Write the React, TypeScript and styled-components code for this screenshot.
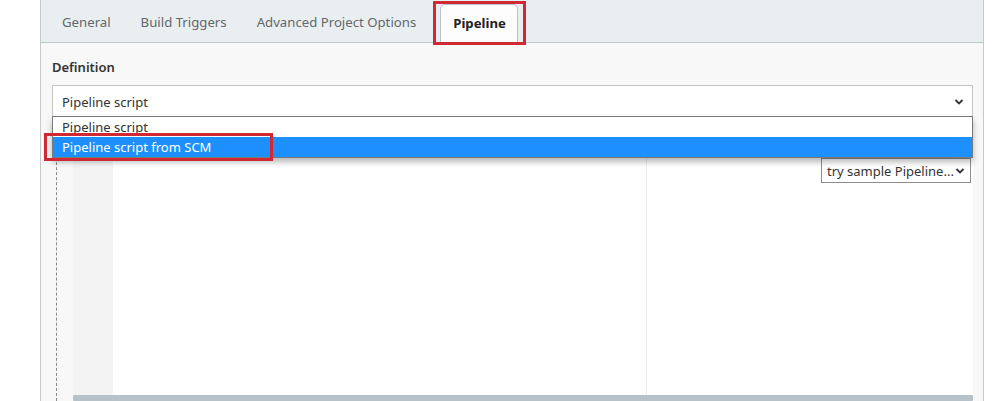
import React from "react";
import styled, { createGlobalStyle } from "styled-components";

const GlobalStyle = createGlobalStyle`
  html, body { margin: 0; padding: 0; background: #ffffff; }
  body { font-family: "Noto Sans", "Open Sans", "Liberation Sans", sans-serif; overflow: hidden; }
`;

const Page = styled.div`
  width: 1001px;
  height: 401px;
  padding-left: 40px;
  box-sizing: border-box;
  overflow: hidden;
`;

const Panel = styled.div`
  width: 944px;
  height: 401px;
  box-sizing: border-box;
  border-left: 1px solid #c9c9c9;
  border-right: 1px solid #c9c9c9;
  background: #f8f8f8;
  display: flex;
  flex-direction: column;
`;

const TabBar = styled.div`
  height: 43px;
  box-sizing: border-box;
  background: #e9eef1;
  border-bottom: 1px solid #bfc8cd;
  display: flex;
  align-items: flex-end;
  gap: 8px;
  padding-left: 10px;
`;

const Tab = styled.div<{ $active?: boolean }>`
  position: relative;
  height: ${(p) => (p.$active ? "39px" : "42px")};
  box-sizing: border-box;
  padding: ${(p) => (p.$active ? "0 11px 2px 12px" : "2px 11px 0 11px")};
  margin-left: ${(p) => (p.$active ? "5px" : "0")};
  display: flex;
  align-items: center;
  font-size: 13.2px;
  color: ${(p) => (p.$active ? "#222" : "#63686c")};
  font-weight: ${(p) => (p.$active ? 700 : 400)};
  background: ${(p) => (p.$active ? "#fdfdfd" : "transparent")};
  border: ${(p) => (p.$active ? "1px solid #b9c2c7" : "none")};
  border-bottom: none;
  border-radius: 5px 5px 0 0;
  margin-bottom: ${(p) => (p.$active ? "-1px" : "0")};
`;

const RedBox = styled.div<{ $t: number; $r: number; $b: number; $l: number }>`
  position: absolute;
  top: ${(p) => p.$t}px;
  right: ${(p) => p.$r}px;
  bottom: ${(p) => p.$b}px;
  left: ${(p) => p.$l}px;
  border: 3px solid #cf2a33;
  pointer-events: none;
  z-index: 5;
`;

const Content = styled.div`
  flex: 1;
  padding: 0 10px 0 11px;
  display: flex;
  flex-direction: column;
`;

const Label = styled.div`
  font-size: 13px;
  font-weight: 600;
  color: #333;
  margin-top: 15px;
  height: 18px;
  line-height: 18px;
`;

const SelectWrap = styled.div`
  position: relative;
  margin-top: 9px;
  width: 921px;
`;

const SelectBox = styled.div`
  height: 32px;
  box-sizing: border-box;
  background: #fff;
  border: 1px solid #c4c4c4;
  border-bottom-color: #9a9a9a;
  display: flex;
  align-items: center;
  justify-content: space-between;
  padding: 2px 8px 0 9px;
  font-size: 13px;
  color: #333;
`;

const Chevron = styled.svg`
  width: 10px;
  height: 8px;
`;

const DropList = styled.div`
  position: absolute;
  top: 31px;
  left: 0;
  width: 921px;
  box-sizing: border-box;
  background: #fff;
  border: 1px solid #7a7a7a;
  box-shadow: 0 4px 6px rgba(0, 0, 0, 0.28);
  z-index: 4;
`;

const Option = styled.div<{ $selected?: boolean }>`
  position: relative;
  height: 20px;
  line-height: 20px;
  padding-left: 9px;
  font-size: 13px;
  color: ${(p) => (p.$selected ? "#fff" : "#333")};
  background: ${(p) => (p.$selected ? "#1e8fff" : "#fff")};
`;

const EditorRow = styled.div`
  display: flex;
  margin-top: 10px;
  flex: 1;
`;

const Stepper = styled.div`
  width: 21px;
  display: flex;
  justify-content: flex-start;
  padding-left: 4px;
  box-sizing: border-box;
`;

const DashLine = styled.div`
  width: 0;
  height: 100%;
  border-left: 1px dashed #8a8a8a;
`;

const Editor = styled.div`
  position: relative;
  width: 903px;
  display: flex;
  flex-direction: column;
  background: #fff;
`;

const EditorBody = styled.div`
  flex: 1;
  display: flex;
`;

const Gutter = styled.div`
  width: 40px;
  background: #f3f3f3;
`;

const Code = styled.div`
  flex: 1;
  display: flex;
  background: #fff;
`;

const Margin = styled.div`
  width: 533px;
  border-right: 1px solid #ececec;
`;

const Scrollbar = styled.div`
  height: 6px;
  background: #b6c1c8;
  border-radius: 1px;
`;

const SampleSelect = styled.div`
  position: absolute;
  top: 31px;
  right: 2px;
  width: 150px;
  height: 25px;
  box-sizing: border-box;
  background: #fff;
  border: 1px solid #8d8d8d;
  display: flex;
  align-items: center;
  justify-content: space-between;
  padding: 0 5px 0 5px;
  font-size: 13px;
  color: #333;
`;

const ChevronIcon = () => (
  <Chevron viewBox="0 0 10 8">
    <path d="M1.5 2 L5 5.5 L8.5 2" fill="none" stroke="#333" strokeWidth="1.8" />
  </Chevron>
);

export default function App() {
  return (
    <>
      <GlobalStyle />
      <Page>
        <Panel>
          <TabBar>
            <Tab>General</Tab>
            <Tab>Build Triggers</Tab>
            <Tab>Advanced Project Options</Tab>
            <Tab $active>
              Pipeline
              <RedBox $t={-4} $r={-9} $b={-2} $l={-8} />
            </Tab>
          </TabBar>
          <Content>
            <Label>Definition</Label>
            <SelectWrap>
              <SelectBox>
                <span>Pipeline script</span>
                <ChevronIcon />
              </SelectBox>
              <DropList>
                <Option>Pipeline script</Option>
                <Option $selected>
                  Pipeline script from SCM
                  <RedBox $t={-4} $r={699} $b={-4} $l={-9} />
                </Option>
              </DropList>
            </SelectWrap>
            <EditorRow>
              <Stepper>
                <DashLine />
              </Stepper>
              <Editor>
                <EditorBody>
                  <Gutter />
                  <Code>
                    <Margin />
                  </Code>
                </EditorBody>
                <Scrollbar />
                <SampleSelect>
                  <span>try sample Pipeline...</span>
                  <ChevronIcon />
                </SampleSelect>
              </Editor>
            </EditorRow>
          </Content>
        </Panel>
      </Page>
    </>
  );
}
